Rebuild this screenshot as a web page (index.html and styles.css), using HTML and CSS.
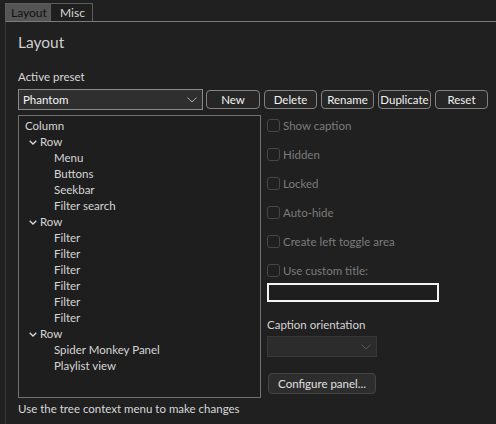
FILE: index.html
```html
<!DOCTYPE html>
<html>
<head>
<meta charset="utf-8">
<link rel="stylesheet" href="styles.css">
</head>
<body>
<div class="tabs">
  <div class="tab active">Layout</div>
  <div class="tab">Misc</div>
</div>
<div class="panel">
  <div class="heading">Layout</div>
  <div class="label">Active preset</div>
  <div class="preset-row">
    <div class="combo">
      <span class="combo-text">Phantom</span>
      <svg class="chev" width="10" height="6" viewBox="0 0 10 6"><path d="M0.5 0.5 L5 5 L9.5 0.5" fill="none" stroke="#b0b0b0" stroke-width="1"/></svg>
    </div>
    <div class="btn b-new">New</div>
    <div class="btn">Delete</div>
    <div class="btn">Rename</div>
    <div class="btn">Duplicate</div>
    <div class="btn">Reset</div>
  </div>
  <div class="main">
    <div class="tree">
      <div class="node l0">Column</div>
      <div class="node l1"><svg class="tw" width="8" height="5" viewBox="0 0 8 5"><path d="M0.7 0.7 L4 4 L7.3 0.7" fill="none" stroke="#d8d8d8" stroke-width="1.3"/></svg>Row</div>
      <div class="node l2">Menu</div>
      <div class="node l2">Buttons</div>
      <div class="node l2">Seekbar</div>
      <div class="node l2">Filter search</div>
      <div class="node l1"><svg class="tw" width="8" height="5" viewBox="0 0 8 5"><path d="M0.7 0.7 L4 4 L7.3 0.7" fill="none" stroke="#d8d8d8" stroke-width="1.3"/></svg>Row</div>
      <div class="node l2">Filter</div>
      <div class="node l2">Filter</div>
      <div class="node l2">Filter</div>
      <div class="node l2">Filter</div>
      <div class="node l2">Filter</div>
      <div class="node l2">Filter</div>
      <div class="node l1"><svg class="tw" width="8" height="5" viewBox="0 0 8 5"><path d="M0.7 0.7 L4 4 L7.3 0.7" fill="none" stroke="#d8d8d8" stroke-width="1.3"/></svg>Row</div>
      <div class="node l2">Spider Monkey Panel</div>
      <div class="node l2">Playlist view</div>
    </div>
    <div class="side">
      <div class="check"><span class="box"></span>Show caption</div>
      <div class="check"><span class="box"></span>Hidden</div>
      <div class="check"><span class="box"></span>Locked</div>
      <div class="check"><span class="box"></span>Auto-hide</div>
      <div class="check"><span class="box"></span>Create left toggle area</div>
      <div class="check"><span class="box"></span>Use custom title:</div>
      <div class="textbox"></div>
      <div class="label2">Caption orientation</div>
      <div class="combo2">
        <svg class="chev2" width="10" height="6" viewBox="0 0 10 6"><path d="M0.5 0.5 L5 5 L9.5 0.5" fill="none" stroke="#555" stroke-width="1"/></svg>
      </div>
      <div class="cfg">Configure panel...</div>
    </div>
  </div>
  <div class="hint">Use the tree context menu to make changes</div>
</div>
</body>
</html>
```
FILE: styles.css
```css
html, body {
  margin: 0;
  padding: 0;
  background: #202020;
  height: 100%;
}
body {
  font-family: Lato, "Noto Sans", sans-serif;
  font-size: 11.5px;
  color: #dadada;
  width: 496px;
  height: 424px;
  overflow: hidden;
  display: flex;
  flex-direction: column;
}
.tabs {
  display: flex;
  padding: 3px 0 0 5px;
  height: 18px;
}
.tab {
  box-sizing: border-box;
  height: 18px;
  line-height: 17px;
  font-size: 12px;
  border: 1px solid #5c5c5c;
  border-bottom: none;
  color: #d8d8d8;
  background: #1f1f1f;
}
.tab.active {
  background: #555555;
  color: #101010;
  width: 46px;
  padding-left: 5px;
}
.tab + .tab {
  border-left: none;
  width: 42px;
  padding-left: 9px;
}
.panel {
  flex: 1;
  margin-left: 5px;
  border-top: 1px solid #7a7a7a;
  border-left: 1px solid #3a3a3a;
  padding-left: 12px;
  display: flex;
  flex-direction: column;
}
.heading {
  font-size: 15.5px;
  line-height: 20px;
  margin-top: 10px;
  color: #cfcfcf;
}
.label {
  margin-top: 17px;
  line-height: 16px;
  color: #d8d8d8;
}
.preset-row {
  display: flex;
  align-items: center;
  margin-top: 4px;
  height: 21px;
}
.combo {
  box-sizing: border-box;
  width: 185px;
  height: 21px;
  border: 1px solid #8a8a8a;
  background: #2f2f2f;
  display: flex;
  align-items: center;
  justify-content: space-between;
  padding: 0 5px 0 4px;
}
.combo-text {
  color: #f4f4f4;
}
.btn {
  box-sizing: border-box;
  width: 53px;
  height: 19px;
  border: 1px solid #828282;
  border-radius: 4px;
  background: #262626;
  color: #f2f2f2;
  text-align: center;
  line-height: 17px;
  margin-left: 4px;
}
.btn.b-new {
  margin-left: 3px;
  width: 54px;
}
.main {
  display: flex;
  margin-top: 5px;
}
.tree {
  box-sizing: border-box;
  width: 243px;
  height: 283px;
  border: 1px solid #727272;
  background: #1e1e1e;
  padding-top: 2px;
}
.node {
  height: 16px;
  line-height: 16px;
  color: #d6d6d6;
  white-space: nowrap;
  display: flex;
  align-items: center;
}
.l0 { padding-left: 6px; }
.l1 { padding-left: 10px; }
.l2 { padding-left: 35px; }
.tw {
  margin-right: 3px;
  margin-top: 1px;
}
.side {
  margin-left: 6px;
  display: flex;
  flex-direction: column;
  align-items: flex-start;
}
.check {
  display: flex;
  align-items: center;
  height: 16px;
  margin-top: 13px;
  color: #7c7c7c;
  white-space: nowrap;
}
.check:first-child {
  margin-top: 2px;
}
.box {
  box-sizing: border-box;
  width: 13px;
  height: 13px;
  border: 1px solid #474747;
  border-radius: 3px;
  margin-right: 3px;
}
.textbox {
  box-sizing: border-box;
  width: 172px;
  height: 19px;
  border: 2px solid #f4f4f4;
  background: #1e1e1e;
  margin-top: 5px;
}
.label2 {
  margin-top: 15px;
  line-height: 16px;
  color: #d6d6d6;
}
.combo2 {
  box-sizing: border-box;
  width: 110px;
  height: 21px;
  background: #2c2c2c;
  border: 1px solid #383838;
  margin-top: 3px;
  display: flex;
  align-items: center;
  justify-content: flex-end;
  padding-right: 5px;
}
.cfg {
  box-sizing: border-box;
  width: 108px;
  height: 21px;
  margin-top: 16px;
  margin-left: 1px;
  border: 1px solid #444;
  border-radius: 4px;
  background: #2d2d2d;
  color: #e0e0e0;
  text-align: center;
  line-height: 19px;
}
.hint {
  margin-top: 3px;
  line-height: 16px;
  color: #d8d8d8;
}
```
